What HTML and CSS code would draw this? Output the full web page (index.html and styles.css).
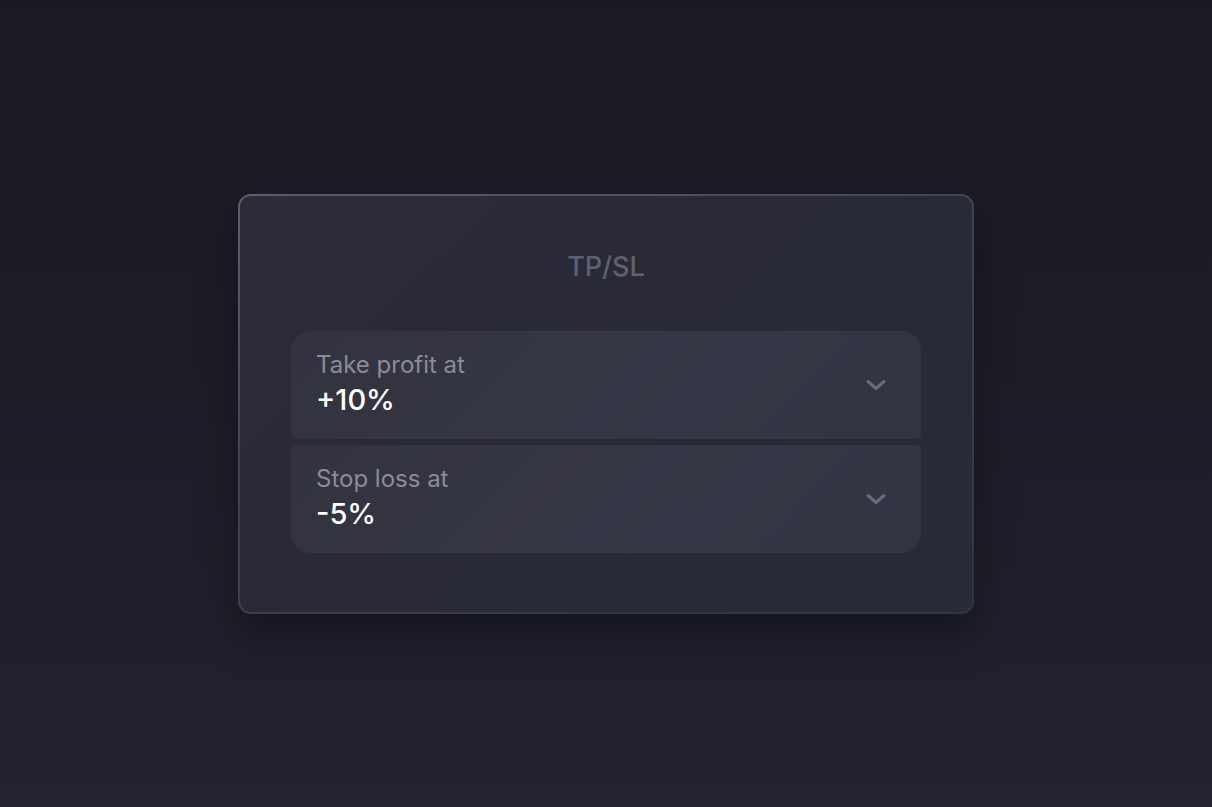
FILE: index.html
```html
<!DOCTYPE html>
<html>
<head>
<meta charset="utf-8">
<link rel="stylesheet" href="styles.css">
</head>
<body>
<div class="stage">
  <div class="card">
    <h1 class="title">TP/SL</h1>
    <div class="rows">
      <div class="row row-top">
        <div class="texts">
          <div class="label">Take profit at</div>
          <div class="value">+10%</div>
        </div>
        <svg class="chev" width="22" height="14" viewBox="0 0 22 14"><path d="M3 3.5 L11 10.5 L19 3.5" fill="none" stroke="#6a6b80" stroke-width="3" stroke-linecap="round" stroke-linejoin="round"/></svg>
      </div>
      <div class="row row-bottom">
        <div class="texts">
          <div class="label">Stop loss at</div>
          <div class="value">-5%</div>
        </div>
        <svg class="chev" width="22" height="14" viewBox="0 0 22 14"><path d="M3 3.5 L11 10.5 L19 3.5" fill="none" stroke="#6a6b80" stroke-width="3" stroke-linecap="round" stroke-linejoin="round"/></svg>
      </div>
    </div>
  </div>
</div>
</body>
</html>
```
FILE: styles.css
```css
html, body {
  margin: 0;
  padding: 0;
}
body {
  width: 1212px;
  height: 807px;
  overflow: hidden;
  background: linear-gradient(180deg, #1a1a23 0%, #1d1d28 45%, #222230 100%);
  font-family: Inter, "Noto Sans", sans-serif;
}
.stage {
  width: 1212px;
  height: 807px;
  display: flex;
  align-items: center;
  justify-content: center;
}
.card {
  box-sizing: border-box;
  width: 736px;
  height: 420px;
  border-radius: 13px;
  border: 2px solid transparent;
  background:
    linear-gradient(135deg, #2c2c39 0%, #292a36 50%, #282a37 100%) padding-box,
    linear-gradient(160deg, #5e5f6a 0%, #43444f 40%, #33343f 100%) border-box;
  box-shadow: 0 20px 40px rgba(0, 0, 0, 0.35);
  padding: 0 51px 58px;
  display: flex;
  flex-direction: column;
}
.title {
  margin: 0;
  height: 135px;
  box-sizing: border-box;
  padding-top: 54px;
  text-align: center;
  font-size: 27px;
  font-weight: 500;
  line-height: 34px;
  color: #5f6073;
}
.rows {
  display: flex;
  flex-direction: column;
  gap: 6px;
}
.row {
  height: 108px;
  box-sizing: border-box;
  background: linear-gradient(135deg, #33333f 0%, #363746 60%, #333442 100%);
  display: flex;
  align-items: center;
  justify-content: space-between;
  padding: 0 34px 0 25px;
}
.row-top {
  border-radius: 20px 20px 5px 5px;
}
.row-bottom {
  border-radius: 5px 5px 20px 20px;
}
.texts {
  display: flex;
  flex-direction: column;
  margin-top: 0;
}
.label {
  font-size: 24px;
  line-height: 30px;
  color: #8b8b9c;
}
.value {
  font-size: 29px;
  line-height: 38px;
  margin-top: 1px;
  font-weight: 500;
  color: #ffffff;
}
.chev {
  display: block;
}
```
